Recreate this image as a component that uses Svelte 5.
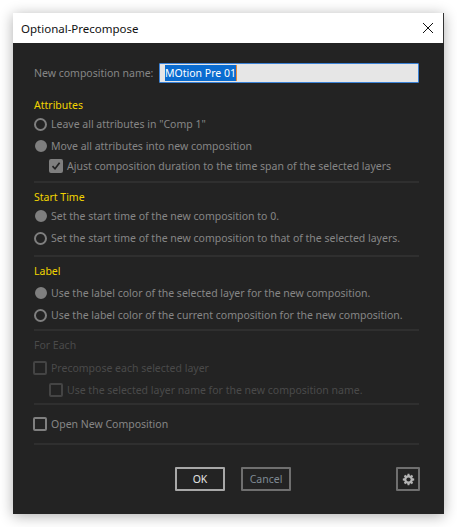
<script>
  const cog = "M6.9 1h2.2l.3 1.9 1.1.5 1.6-1.1 1.6 1.6-1.1 1.6.5 1.1L15 6.9v2.2l-1.9.3-.5 1.1 1.1 1.6-1.6 1.6-1.6-1.1-1.1.5L9.1 15H6.9l-.3-1.9-1.1-.5-1.6 1.1-1.6-1.6 1.1-1.6-.5-1.1L1 9.1V6.9l1.9-.3.5-1.1-1.1-1.6 1.6-1.6 1.6 1.1 1.1-.5z";
</script>

<div class="page">
  <div class="dialog">
    <header class="titlebar">
      <span class="title">Optional-Precompose</span>
      <svg class="close" width="12" height="12" viewBox="0 0 12 12" aria-hidden="true">
        <path d="M1 1l10 10M11 1L1 11" stroke="#111" stroke-width="1" fill="none" />
      </svg>
    </header>
    <main class="body">
      <div class="name-row">
        <label for="comp-name">New composition name:</label>
        <div class="input" id="comp-name"><span class="selected">MOtion Pre 01</span></div>
      </div>

      <section class="attrs">
        <h2>Attributes</h2>
        <div class="row r-first"><span class="radio"></span>Leave all attributes in "Comp 1"</div>
        <div class="row"><span class="radio on"></span>Move all attributes into new composition</div>
        <div class="row sub tight">
          <span class="check on">
            <svg width="10" height="10" viewBox="0 0 10 10" aria-hidden="true"><path d="M1.5 5.2L4 7.8 8.6 1.8" stroke="#222" stroke-width="1.7" fill="none" /></svg>
          </span>Ajust composition duration to the time span of the selected layers
        </div>
      </section>

      <section class="start">
        <h2>Start Time</h2>
        <div class="row r-first"><span class="radio on"></span>Set the start time of the new composition to 0.</div>
        <div class="row"><span class="radio"></span>Set the start time of the new composition to that of the selected layers.</div>
      </section>

      <section class="label">
        <h2>Label</h2>
        <div class="row r-first"><span class="radio on"></span>Use the label color of the selected layer for the new composition.</div>
        <div class="row"><span class="radio"></span>Use the label color of the current composition for the new composition.</div>
      </section>

      <section class="each disabled">
        <h2>For Each</h2>
        <div class="row r-first"><span class="check"></span>Precompose each selected layer</div>
        <div class="row sub"><span class="check"></span>Use the selected layer name for the new composition name.</div>
      </section>

      <section class="open">
        <div class="row"><span class="check"></span>Open New Composition</div>
      </section>

      <footer class="actions">
        <button class="btn primary">OK</button>
        <button class="btn cancel">Cancel</button>
        <button class="btn gear" aria-label="Settings">
          <svg width="13" height="13" viewBox="0 0 16 16" aria-hidden="true">
            <path d={cog} fill="#b4b4b4" /><circle cx="8" cy="8" r="2.6" fill="#232323" />
          </svg>
        </button>
      </footer>
    </main>
  </div>
</div>

<style>
  :global(body) {
    margin: 0;
    background: #fff;
  }
  .page {
    width: 457px;
    height: 527px;
    padding: 13px;
    box-sizing: border-box;
    overflow: hidden;
    font-family: "Noto Sans", "Open Sans", sans-serif;
  }
  .dialog {
    width: 431px;
    height: 501px;
    display: flex;
    flex-direction: column;
    box-shadow: 0 2px 13px rgba(0, 0, 0, 0.32);
    background: #232323;
  }
  .titlebar {
    height: 30px;
    flex: none;
    background: #fff;
    display: flex;
    align-items: center;
    justify-content: space-between;
    padding: 0 9px 0 8px;
    border-right: 1px solid #333;
  }
  .title {
    font-size: 11.5px;
    color: #111;
  }
  .body {
    flex: 1;
    padding: 20px 25px 0 21px;
    color: #868686;
    font-size: 10.5px;
  }
  .name-row {
    display: flex;
    align-items: center;
    gap: 5px;
    height: 20px;
  }
  .name-row label {
    width: 120px;
    white-space: nowrap;
  }
  .input {
    width: 260px;
    height: 20px;
    box-sizing: border-box;
    background: #e6e6e6;
    border: 1px solid #3b82d6;
    border-radius: 1px;
    padding: 1px 5px;
    line-height: 16px;
    font-size: 10.5px;
  }
  .selected {
    display: inline-block;
    height: 16px;
    background: #0a6cd0;
    color: #fff;
    border-right: 1px solid #e8893a;
  }
  section {
    border-bottom: 2px solid #2f2f2f;
    box-sizing: border-box;
  }
  .attrs {
    margin-top: 12px;
    height: 88px;
    padding-top: 2px;
  }
  .start {
    height: 74px;
    padding-top: 6px;
  }
  .label {
    height: 74px;
    padding-top: 6px;
  }
  .each {
    height: 74px;
    padding-top: 6px;
  }
  .open {
    height: 40px;
    padding-top: 11px;
  }
  h2 {
    margin: 0;
    font-size: 10.5px;
    font-weight: 400;
    line-height: 16px;
    color: #f2d500;
  }
  .row {
    display: flex;
    align-items: center;
    gap: 4px;
    height: 16px;
    margin-top: 6px;
    white-space: nowrap;
  }
  .row.r-first {
    margin-top: 3px;
  }
  .label .row.r-first {
    margin-top: 6px;
  }
  .each .row.r-first {
    margin-top: 7px;
  }
  .row.tight {
    margin-top: 4px;
  }
  .row.sub {
    padding-left: 16px;
  }
  .radio {
    width: 13px;
    height: 13px;
    box-sizing: border-box;
    border-radius: 50%;
    border: 2px solid #7f7f7f;
    flex: none;
  }
  .radio.on {
    background: #7f7f7f;
    width: 12px;
    height: 12px;
    margin-left: 1px;
  }
  .check {
    width: 14px;
    height: 14px;
    margin-left: -1px;
    box-sizing: border-box;
    border: 2px solid #7f7f7f;
    border-radius: 2px;
    flex: none;
    display: flex;
    align-items: center;
    justify-content: center;
  }
  .check.on {
    background: #7f7f7f;
  }
  .disabled h2,
  .disabled .row {
    color: #4a4a4a;
  }
  .disabled .check {
    border-color: #444;
  }
  .open .row {
    margin-top: 0;
  }
  .actions {
    display: flex;
    align-items: flex-start;
    margin-top: 22px;
    padding-left: 141px;
  }
  .btn {
    flex: none;
    height: 24px;
    width: 50px;
    box-sizing: border-box;
    background: transparent;
    border: 2px solid #6f6f6f;
    border-radius: 1px;
    font: inherit;
    font-size: 10.5px;
    color: #ccc;
    padding: 0;
  }
  .primary {
    border-color: #a8a8a8;
    color: #e4e4e4;
  }
  .cancel {
    margin-left: 16px;
    color: #7f8a94;
  }
  .gear {
    width: 24px;
    margin-left: 105px;
    display: flex;
    align-items: center;
    justify-content: center;
  }
</style>
